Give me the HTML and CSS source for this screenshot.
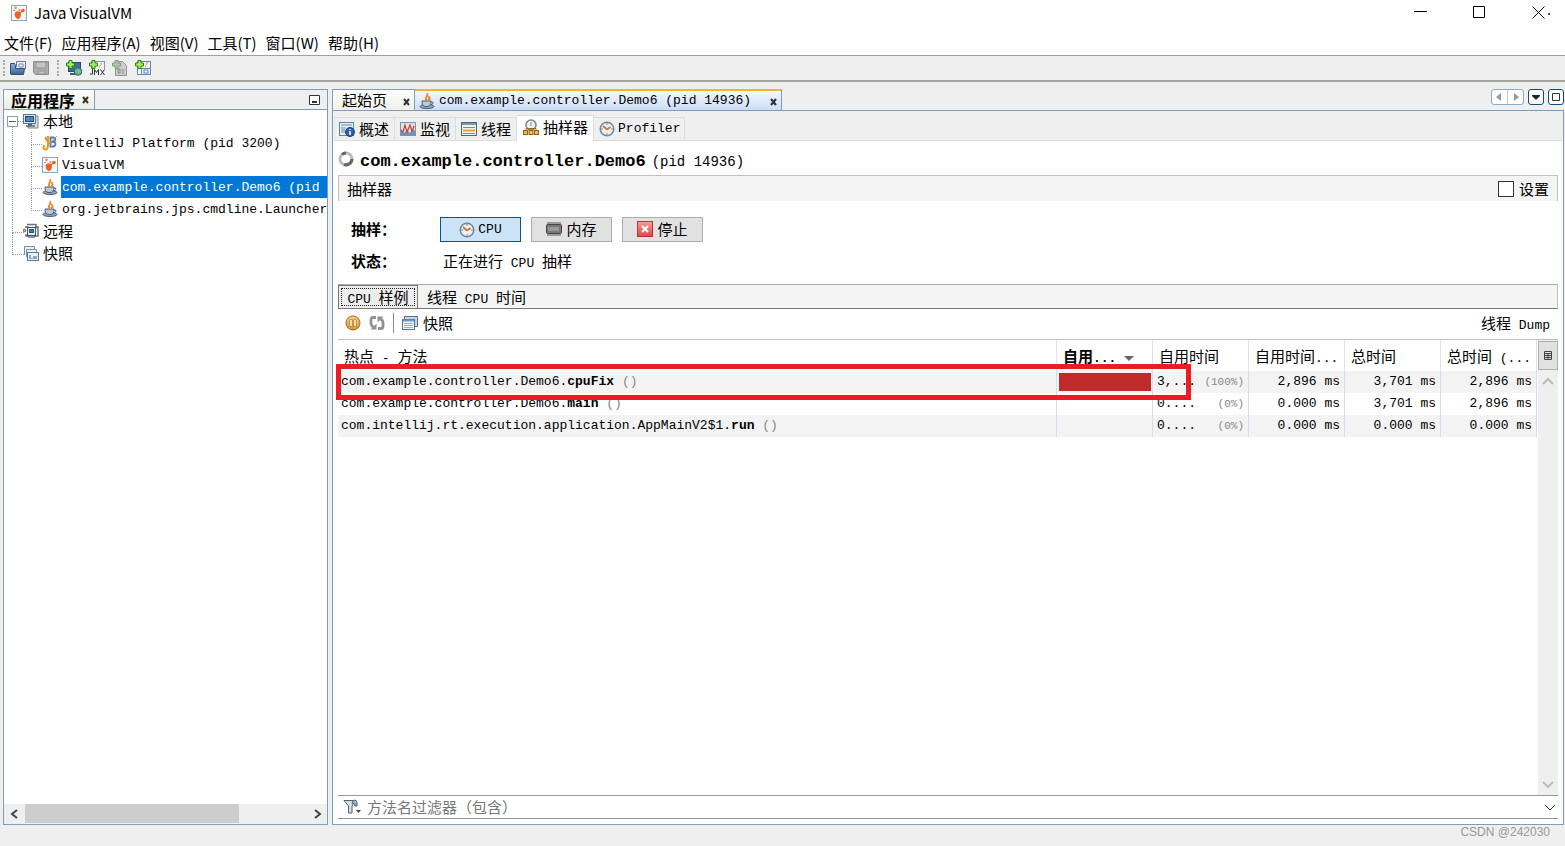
FILE: index.html
```html
<!DOCTYPE html>
<html lang="zh-CN">
<head>
<meta charset="utf-8">
<title>Java VisualVM</title>
<link rel="stylesheet" href="styles.css">
</head>
<body>
<svg class="defs" aria-hidden="true">
  <defs>
    <linearGradient id="gb" x1="0" y1="0" x2="0" y2="1"><stop offset="0" stop-color="#8fb0d4"/><stop offset="1" stop-color="#3a6496"/></linearGradient>
    <linearGradient id="go" x1="0" y1="0" x2="0" y2="1"><stop offset="0" stop-color="#fbd38a"/><stop offset="1" stop-color="#e0902c"/></linearGradient>
    <linearGradient id="gr" x1="0" y1="0" x2="0" y2="1"><stop offset="0" stop-color="#f5a09a"/><stop offset="1" stop-color="#dc4742"/></linearGradient>
    <symbol id="vm" viewBox="0 0 16 16"><rect x=".5" y=".5" width="15" height="15" fill="#f5f8fb" stroke="#8ba6c1"/><path d="M4.500 7q3-1.500 5 .5l.5 2-1 3.500q-2 2-4 0-2.500-3-.5-6z" fill="#e8622a"/><circle cx="12" cy="5.500" r="1.800" fill="#e8622a"/><circle cx="4.500" cy="2.800" r="1.400" fill="#f08a50"/><circle cx="8.500" cy="5" r="1" fill="#f08a50"/><path d="M9 8l2.500-2" stroke="#e8622a" stroke-width="1.200"/><circle cx="3" cy="5.500" r=".8" fill="#e8622a"/></symbol>
    <symbol id="java" viewBox="0 0 16 16"><ellipse cx="8" cy="13.500" rx="7" ry="2" fill="#93a7ba" stroke="#49617a"/><path d="M3 8h9q0 5-3 5.500H6Q3 13 3 8z" fill="#b9c9d8" stroke="#49617a"/><path d="M12 9q3 0 2 1.500t-3 1" fill="none" stroke="#49617a"/><path d="M8 8C4 5 10 4 8 0m1 7c4-2 0-2 1-4" fill="none" stroke="#ef8123" stroke-width="1.700"/></symbol>
    <symbol id="jb" viewBox="0 0 16 16"><path d="M6 1v9q0 5-3 4.500-3-1-.5-4M3 2l4 7" fill="none" stroke="#ee9420" stroke-width="2"/><path d="M8.500 2.500h3q2.500.5 1.500 3-1 1-3.500 1.500 4-.5 4 2 0 3-5 2.500z" fill="none" stroke="#4f78bd" stroke-width="1.800"/><path d="M6 9.500L15 1" stroke="#ee9420"/></symbol>
    <symbol id="pc" viewBox="0 0 16 16"><path d="M12 3h3v12H5v-2" fill="#d9dfe6" stroke="#778594"/><rect x=".5" y="1.500" width="12" height="9" fill="#dce5ed" stroke="#62758a"/><rect x="2.500" y="3.500" width="8" height="5" fill="#4e86c4" stroke="#234e82"/><path d="M3 13h9M5 11.500h4" stroke="#536b84" stroke-width="1.500"/></symbol>
    <symbol id="remote" viewBox="0 0 16 16"><path d="M4 1.500h9v4M2 4h3v9H3v-2m8 2h4V4h-3M5 14h7" fill="none" stroke="#607387" stroke-width="1.500"/><rect x="4.500" y="4.500" width="8" height="8" fill="#eaf0f5" stroke="#3a5370"/><rect x="6.500" y="6.500" width="4" height="3" fill="#327bca" stroke="#24558a"/><circle cx="1.500" cy="7.500" r="1.300" fill="#e6a945" stroke="#876020"/></symbol>
    <symbol id="snap" viewBox="0 0 16 16"><path d="M1.500 10V1.500h10v3M3.500 12V4.500h10v3" fill="#edf3fa" stroke="#7790b1"/><rect x="4.500" y="7.500" width="11" height="8" fill="#edf3fa" stroke="#5c7699"/><path d="M6 10h2v3h2v-2h4v3H6z" fill="#91a7c4"/></symbol>
    <symbol id="snapshot" viewBox="0 0 16 16"><path d="M2.500 4V1.500h13v10H13" fill="#c6d5e5" stroke="#5b718a"/><rect x=".5" y="4.500" width="12" height="10" fill="#f0f5f9" stroke="#5b718a"/><path d="M1 5.500h11" stroke="#6f9bc9" stroke-width="2"/><path d="M2 8.500h9M2 10.500h9M2 12.500h9" stroke="#9eb1c4"/></symbol>
    <symbol id="clock" viewBox="0 0 16 16"><circle cx="8" cy="8" r="6.800" fill="#edf3f8" stroke="#72869c" stroke-width="1.500"/><path d="M8 2v2M8 12v2M2 8h2M12 8h2" stroke="#71879b"/><path d="M4 5l4 3.500L11.500 6" fill="none" stroke="#e36b25" stroke-width="1.700"/></symbol>
    <symbol id="overview" viewBox="0 0 16 16"><rect x=".5" y="1.500" width="14" height="13" fill="#e7edf4" stroke="#6683a2"/><path d="M2 4h11M2 7h5M2 9h4M2 11h4" stroke="#718ba7"/><circle cx="11" cy="11" r="4.500" fill="#2a61ab" stroke="#173f7c"/><path d="M11 8v1m0 1v4" stroke="#fff" stroke-width="1.500"/></symbol>
    <symbol id="monitor" viewBox="0 0 16 16"><rect x=".5" y="1.500" width="15" height="13" fill="#d9e3ed" stroke="#8095aa"/><path d="M1 13V9l3 3 3-3 3 3 3-4 2 2v4H1z" fill="#4c7bb2" opacity=".8"/><path d="M1 9l2 2 2-7 2 7 3-7 2 6 2-5" fill="none" stroke="#d64137" stroke-width="1.300"/></symbol>
    <symbol id="thread" viewBox="0 0 16 16"><rect x=".5" y="1.500" width="15" height="13" fill="#f0f3f5" stroke="#536879"/><path d="M1 3h14" stroke="#8096aa" stroke-width="2"/><path d="M2 6.500h12M2 12.500h12" stroke="#56a85a"/><path d="M2 9.500h12" stroke="#e5a738" stroke-width="2"/></symbol>
    <symbol id="sampler" viewBox="0 0 16 16"><circle cx="8" cy="6" r="5" fill="#edf4fa" stroke="#71869a" stroke-width="1.500"/><path d="M3 12V9.500h10V12" fill="none" stroke="#9f661b"/><path d="M8 3v4" stroke="#dc6b24"/><rect x=".5" y="11.500" width="4" height="4" fill="#f1bf51" stroke="#936018"/><rect x="6" y="11.500" width="4" height="4" fill="#f1bf51" stroke="#936018"/><rect x="11.500" y="11.500" width="4" height="4" fill="#f1bf51" stroke="#936018"/></symbol>
    <symbol id="memory" viewBox="0 0 16 16"><rect x=".5" y="3.500" width="15" height="9" rx="1" fill="#777" stroke="#444"/><path d="M2 1v2m2-2v2m2-2v2m2-2v2m2-2v2m2-2v2m2-2v2M2 13v2m2-2v2m2-2v2m2-2v2m2-2v2m2-2v2m2-2v2" stroke="#555"/><path d="M2 6h11v4H2" fill="#999"/></symbol>
    <symbol id="stop" viewBox="0 0 16 16"><rect x=".5" y=".5" width="15" height="15" fill="url(#gr)" stroke="#bc3433"/><path d="M5 5l6 6m0-6l-6 6" stroke="#fff" stroke-width="2"/></symbol>
    <symbol id="pause" viewBox="0 0 16 16"><circle cx="8" cy="8" r="7" fill="url(#go)" stroke="#9d6726"/><path d="M6 4.500v7m4-7v7" stroke="#a8701f" stroke-width="3"/><path d="M6 5v6m4-6v6" stroke="#fff" stroke-width="1.500"/></symbol>
    <symbol id="refresh" viewBox="0 0 16 16"><path d="M7 2.500H4Q2 2.500 2 5v3q0 3 2.500 4M9 13.500h3q2 0 2-2.500V8q0-3-2.500-4" fill="none" stroke="#929292" stroke-width="2.800"/><path d="M1.500 14.500H7.500V8.500zM14.500 1.500H8.500V7.500z" fill="#929292"/></symbol>
    <symbol id="open" viewBox="0 0 16 16"><path d="M6.500 7V1.500h9V9" fill="#e6eef7" stroke="#607c9c"/><path d="M9 4h4v3H9z" fill="#fff" stroke="#6689b2"/><path d="M.5 14V3.500h4l1 2v3h9l-1 6H1z" fill="url(#gb)" stroke="#2f4f73"/></symbol>
    <symbol id="save" viewBox="0 0 16 16"><path d="M.5 1.500h15v13h-13l-2-2z" fill="#adadad" stroke="#8c8c8c"/><path d="M3 2h10v6H3zM5 11h7v3H5z" fill="#c5c5c5" stroke="#929292"/></symbol>
    <symbol id="plus" viewBox="0 0 16 16"><path d="M3 .5h3V3h2.500v3H6v2.500H3V6H.5V3H3z" fill="#a6ec5d" stroke="#26851e"/></symbol>
    <symbol id="addhost" viewBox="0 0 16 16"><rect x="2.500" y="2.500" width="12" height="9" fill="#416f9e" stroke="#294869"/><path d="M4 14h7" stroke="#455d74" stroke-width="2"/><circle cx="12" cy="11.500" r="3.800" fill="#65b77b" stroke="#355f79"/><path d="M10 10l2 1v3l2-4" fill="#88b8e5"/><use href="#plus"/></symbol>
    <symbol id="addjmx" viewBox="0 0 16 16"><rect x="2.500" y="1.500" width="13" height="13" fill="#eef3f8" stroke="#8297ac"/><path d="M11 8c-2-2 2-2 1-5" fill="none" stroke="#ef8123"/><path d="M1 9h15v6H1z" fill="#eee"/><path d="M3.500 9v5H1m4.500 1V9.500l2 3 2-3V15m2-5.500l4 5.500m0-5.500l-4 5.500" fill="none" stroke="#333"/><use href="#plus"/></symbol>
    <symbol id="adddump" viewBox="0 0 16 16"><path d="M3.500 1.500h7l4 4v10h-11z" fill="#ccc" stroke="#949494"/><path d="M6 9h2v4H6zm5 0v5" fill="none" stroke="#888"/><path d="M3 .5h3V3h2.500v3H6v2.500H3V6H.5V3H3z" fill="#abc3a1" stroke="#83a27b"/></symbol>
    <symbol id="addapp" viewBox="0 0 16 16"><rect x="2.500" y="1.500" width="13" height="13" fill="#eaf2fa" stroke="#6a88aa"/><path d="M11 7c-2-2 2-2 1-5" fill="none" stroke="#ef8123"/><path d="M3 8.500h12M6.500 9v5" stroke="#6a88aa"/><rect x="9" y="10" width="4" height="3" fill="#fff" stroke="#5887c0"/><use href="#plus"/></symbol>
    <symbol id="filter" viewBox="0 0 18 16"><path d="M1 1.500h12L9 7v7H5.500V7z" fill="#d7dfe6" stroke="#50606d"/><path d="M9 4q0-3 3-3 3 1 2 6h-2q0-3-3-3z" fill="#a8b7c3" stroke="#50606d"/><path d="M13 11h5l-2.500 3z" fill="#444"/></symbol>
  </defs>
</svg>

<div class="window">
  <header class="titlebar">
    <svg class="icon"><use href="#vm"/></svg>
    <h1 class="app-name">Java VisualVM</h1>
    <div class="window-controls">
      <button aria-label="最小化"><svg class="caption"><path d="M0 5.500h13" stroke="#000"/></svg></button>
      <button aria-label="最大化"><svg class="caption"><path d="M.5.500h11v11H.500z" fill="none" stroke="#000"/></svg></button>
      <button aria-label="关闭"><svg class="caption"><path d="M.5.500l12 12m0-12l-12 12" stroke="#000"/></svg></button>
    </div>
    <i class="speck"></i>
  </header>

  <nav class="menubar">
    <button>文件(F)</button><button>应用程序(A)</button><button>视图(V)</button><button>工具(T)</button><button>窗口(W)</button><button>帮助(H)</button>
  </nav>

  <div class="toolbar">
    <i class="grip"></i>
    <button aria-label="打开"><svg class="icon"><use href="#open"/></svg></button>
    <button aria-label="保存"><svg class="icon"><use href="#save"/></svg></button>
    <i class="grip"></i>
    <button aria-label="添加远程主机"><svg class="icon"><use href="#addhost"/></svg></button>
    <button aria-label="添加 JMX 连接"><svg class="icon"><use href="#addjmx"/></svg></button>
    <button aria-label="添加 Dump"><svg class="icon"><use href="#adddump"/></svg></button>
    <button aria-label="添加快照"><svg class="icon"><use href="#addapp"/></svg></button>
  </div>

  <main class="workspace">
    <aside class="explorer">
      <div class="explorer-head">
        <div class="explorer-tab"><b>应用程序</b><button class="close" aria-label="关闭应用程序"><svg class="cross"><path d="M1 1l5 6m0-6l-5 6" stroke="#333" stroke-width="2"/></svg></button></div>
        <button class="minimize" aria-label="最小化面板"><svg class="mini"><path d="M.5.500h10v9H.500z" fill="#fff" stroke="#333"/><path d="M3 7h5" stroke="#333" stroke-width="2"/></svg></button>
      </div>
      <ul class="tree">
        <li class="node has-toggle">
          <div class="row"><button class="toggle" aria-label="折叠"></button><svg class="icon"><use href="#pc"/></svg><span>本地</span></div>
          <ul class="children">
            <li class="leaf"><div class="row"><svg class="icon"><use href="#jb"/></svg><span class="mono">IntelliJ Platform (pid 3200)</span></div></li>
            <li class="leaf"><div class="row"><svg class="icon"><use href="#vm"/></svg><span class="mono">VisualVM</span></div></li>
            <li class="leaf"><div class="row"><svg class="icon"><use href="#java"/></svg><span class="mono selected">com.example.controller.Demo6 (pid</span></div></li>
            <li class="leaf"><div class="row"><svg class="icon"><use href="#java"/></svg><span class="mono">org.jetbrains.jps.cmdline.Launcher</span></div></li>
          </ul>
        </li>
        <li class="node"><div class="row"><svg class="icon"><use href="#remote"/></svg><span>远程</span></div></li>
        <li class="node"><div class="row"><svg class="icon"><use href="#snap"/></svg><span>快照</span></div></li>
      </ul>
      <div class="hscroll">
        <button aria-label="向左"><svg class="arrow"><path d="M8 2L3 6l5 4" fill="none" stroke="#444" stroke-width="2"/></svg></button>
        <div class="htrack"><div class="thumb"></div></div>
        <button aria-label="向右"><svg class="arrow"><path d="M4 2l5 4-5 4" fill="none" stroke="#444" stroke-width="2"/></svg></button>
      </div>
    </aside>

    <section class="editor">
      <div class="doc-tabs">
        <div class="doc-tab start"><span>起始页</span><button class="close" aria-label="关闭起始页"><svg class="cross"><path d="M1 1l5 6m0-6l-5 6" stroke="#333" stroke-width="2"/></svg></button></div>
        <div class="doc-tab active"><svg class="icon"><use href="#java"/></svg><span class="mono">com.example.controller.Demo6 (pid 14936)</span><button class="close" aria-label="关闭"><svg class="cross"><path d="M1 1l5 6m0-6l-5 6" stroke="#333" stroke-width="2"/></svg></button></div>
        <div class="doc-controls">
          <div class="pair"><button aria-label="上一个"><svg class="ctl"><path d="M9 3v8L4 7z" fill="#999"/></svg></button><button aria-label="下一个"><svg class="ctl"><path d="M6 3v8l5-4z" fill="#999"/></svg></button></div>
          <button class="framed" aria-label="文档列表"><svg class="ctl"><path d="M3 5h8v1l-4 4-4-4z" fill="#222"/></svg></button>
          <button class="framed" aria-label="最大化"><svg class="ctl"><path d="M3.500 3.500h7v7h-7z" fill="#fff" stroke="#333"/></svg></button>
        </div>
      </div>

      <div class="doc">
        <nav class="view-tabs">
          <button><svg class="icon"><use href="#overview"/></svg>概述</button>
          <button><svg class="icon"><use href="#monitor"/></svg>监视</button>
          <button><svg class="icon"><use href="#thread"/></svg>线程</button>
          <button class="current"><svg class="icon"><use href="#sampler"/></svg>抽样器</button>
          <button class="mono"><svg class="icon"><use href="#clock"/></svg>Profiler</button>
        </nav>

        <div class="content">
          <h2 class="heading"><svg class="icon" viewBox="0 0 16 16"><circle cx="8" cy="8" r="6" fill="none" stroke="#bbb" stroke-width="3"/><path d="M4 3.500A6 6 0 0 1 8 2M14 8a6 6 0 0 1-8 5.500" fill="none" stroke="#666" stroke-width="3"/></svg><b>com.example.controller.Demo6</b><span>(pid 14936)</span></h2>
          <div class="section-head"><span>抽样器</span><label><input type="checkbox">设置</label></div>

          <div class="controls">
            <b>抽样：</b>
            <div class="buttons">
              <button class="pressed mono"><svg class="icon"><use href="#clock"/></svg>CPU</button>
              <button><svg class="icon"><use href="#memory"/></svg>内存</button>
              <button><svg class="icon"><use href="#stop"/></svg>停止</button>
            </div>
            <b>状态：</b>
            <p class="status">正在进行<span class="mono"> CPU </span>抽样</p>
          </div>

          <nav class="sample-tabs">
            <button class="current"><span><span class="mono">CPU </span>样例</span></button>
            <button><span>线程<span class="mono"> CPU </span>时间</span></button>
          </nav>

          <div class="table-tools">
            <button aria-label="暂停"><svg class="icon"><use href="#pause"/></svg></button>
            <button aria-label="刷新"><svg class="icon"><use href="#refresh"/></svg></button>
            <i class="divider"></i>
            <button><svg class="icon"><use href="#snapshot"/></svg>快照</button>
            <button class="dump"><span>线程<span class="mono"> Dump</span></span></button>
          </div>

          <div class="results">
            <div class="table-area">
              <table class="hotspots">
                <colgroup><col><col class="metric"><col class="metric"><col class="metric"><col class="metric"><col class="metric"></colgroup>
                <thead><tr>
                  <th>热点<span class="mono"> - </span>方法</th>
                  <th class="sorted">自用<span class="mono">...</span><svg class="sort"><path d="M0 1h10L5 6z" fill="#666"/></svg></th>
                  <th>自用时间</th><th>自用时间<span class="mono">...</span></th><th>总时间</th><th>总时间<span class="mono"> (...</span></th>
                </tr></thead>
                <tbody>
                  <tr><td>com.example.controller.Demo6.<b>cpuFix</b> <i>()</i></td><td class="bar-cell"><div class="bar"></div></td><td><div class="split"><span>3,...</span><small>(100%)</small></div></td><td>2,896 ms</td><td>3,701 ms</td><td>2,896 ms</td></tr>
                  <tr><td>com.example.controller.Demo6.<b>main</b> <i>()</i></td><td class="bar-cell"></td><td><div class="split"><span>0....</span><small>(0%)</small></div></td><td>0.000 ms</td><td>3,701 ms</td><td>2,896 ms</td></tr>
                  <tr><td>com.intellij.rt.execution.application.AppMainV2$1.<b>run</b> <i>()</i></td><td class="bar-cell"></td><td><div class="split"><span>0....</span><small>(0%)</small></div></td><td>0.000 ms</td><td>0.000 ms</td><td>0.000 ms</td></tr>
                </tbody>
              </table>
            </div>
            <div class="vscroll">
              <button class="columns" aria-label="选择列"><svg class="grid"><path d="M.5.500h7v8H.500zM0 2.500h8M0 4.500h8M0 6.500h8M4 2v7" fill="none" stroke="#444"/></svg></button>
              <button aria-label="向上"><svg class="arrow"><path d="M1 8l5-5 5 5" fill="none" stroke="#bbb" stroke-width="2"/></svg></button>
              <div class="vtrack"></div>
              <button aria-label="向下"><svg class="arrow"><path d="M1 4l5 5 5-5" fill="none" stroke="#bbb" stroke-width="2"/></svg></button>
            </div>
            <div class="highlight"></div>
          </div>

          <div class="filter">
            <svg class="funnel"><use href="#filter"/></svg>
            <input type="text" aria-label="方法名过滤器" placeholder="方法名过滤器（包含）">
            <button aria-label="展开"><svg class="arrow"><path d="M1 4l5 5 5-5" fill="none" stroke="#333"/></svg></button>
          </div>
        </div>
      </div>
    </section>
  </main>
  <footer class="credit">CSDN @242030</footer>
</div>
</body>
</html>
```
FILE: styles.css
```css
* { box-sizing: border-box; }
body { margin: 0; background: #efefef; color: #000; font: 15px/22px "Noto Sans CJK SC", sans-serif; }
button { margin: 0; padding: 0; border: 0; background: none; color: inherit; font: inherit; display: flex; align-items: center; justify-content: center; white-space: nowrap; }
ul { list-style: none; margin: 0; padding: 0; }
svg { display: block; flex: none; }
.defs { position: absolute; width: 0; height: 0; }
.icon { width: 16px; height: 16px; }
.mono { font-family: "Liberation Mono", "Noto Sans CJK SC", monospace; font-size: 13px; line-height: 14px; white-space: pre; }
.window { display: flex; flex-direction: column; min-height: 100vh; }

.titlebar { position: relative; display: flex; align-items: center; gap: 7px; height: 26px; padding: 0 0 1px 11px; background: #fff; }
.app-name { margin: 0; font-size: 15px; font-weight: 400; }
.window-controls { display: flex; gap: 46px; margin-left: auto; padding-right: 20px; }
.caption { width: 13px; height: 13px; }
.speck { position: absolute; right: 15px; top: 13px; width: 2px; height: 2px; background: #555; }

.menubar { display: flex; align-items: center; gap: 9px; height: 29px; padding: 5px 4px 0; background: #fff; }
.toolbar { display: flex; align-items: center; gap: 7px; height: 27px; padding: 0 3px; border-top: 1px solid #a0a0a0; border-bottom: 2px solid #a5a5a0; }
.grip { width: 2px; height: 16px; margin-right: -2px; border-left: 2px dotted #aaa; }
.toolbar button + .grip { margin-left: 1px; margin-right: 0; }

.workspace { flex: 1; display: flex; gap: 4px; padding: 7px 0 0 3px; }
.explorer { flex: none; width: 325px; display: flex; flex-direction: column; border: 1px solid #7f9db9; background: #fff; }
.explorer-head { display: flex; align-items: center; justify-content: space-between; height: 20px; padding-right: 7px; background: #efefef; border-bottom: 1px solid #7f9db9; }
.explorer-tab { display: flex; align-items: center; gap: 7px; height: 19px; padding: 0 5px 0 7px; border-right: 1px solid #7f9db9; background: linear-gradient(#fff, #ecece2); }
.explorer-tab b { font-size: 16px; }
.cross { width: 7px; height: 8px; }
.mini { width: 11px; height: 10px; }

.tree { flex: 1; overflow: hidden; }
.row { display: flex; align-items: center; gap: 4px; height: 22px; padding-left: 19px; white-space: nowrap; }
.row .mono { height: 22px; line-height: 24px; }
.node, .leaf { position: relative; }
.node .toggle { position: absolute; left: 3px; top: 6px; width: 11px; height: 11px; border: 1px solid #999; background: linear-gradient(#45649a, #45649a) center / 7px 1px no-repeat #fff; z-index: 1; }
.node::before { content: ""; position: absolute; left: 8px; top: 0; width: 11px; height: 12px; border-left: 1px dotted #999; border-bottom: 1px dotted #999; }
.node:nth-child(2)::after { content: ""; position: absolute; left: 8px; top: 12px; height: 10px; border-left: 1px dotted #999; }
.node.has-toggle::before { top: 11px; height: 99px; border-bottom: 0; }
.node.has-toggle::after { content: ""; position: absolute; left: 14px; top: 11px; width: 5px; border-top: 1px dotted #999; }
.leaf .row { padding-left: 38px; gap: 3px; }
.leaf .row .mono { padding-left: 1px; }
.leaf::before { content: ""; position: absolute; left: 27px; top: 0; width: 10px; height: 12px; border-left: 1px dotted #999; border-bottom: 1px dotted #999; }
.leaf:not(:last-child)::after { content: ""; position: absolute; left: 27px; top: 12px; height: 10px; border-left: 1px dotted #999; }
.selected { flex: 1; min-width: 0; background: #0078d7; color: #fff; }
.hscroll { display: flex; height: 20px; background: #efefef; }
.hscroll button { width: 21px; }
.arrow { width: 12px; height: 12px; }
.htrack { flex: 1; }
.thumb { width: 76%; height: 19px; background: #cdcdcd; }

.editor { flex: 1; min-width: 0; display: flex; flex-direction: column; }
.doc-tabs { display: flex; height: 21px; }
.doc-tab { display: flex; align-items: center; border: 1px solid #7f9db9; border-bottom: 0; }
.start { width: 83px; justify-content: space-between; padding: 0 4px 0 9px; background: linear-gradient(#fff, #f0f0e8); }
.active { gap: 4px; padding: 0 4px; background: linear-gradient(#f5f8ff, #ccdcf5); border-top: 2px solid #f5b335; border-left: 0; }
.active .mono { line-height: 20px; }
.doc-tab .close { margin-top: 3px; }
.active .close { margin-left: 15px; }
.doc-controls { display: flex; align-items: flex-start; gap: 4px; margin-left: auto; margin-right: 1px; }
.doc-controls .pair { display: flex; border: 1px solid #8faac3; border-radius: 3px; background: #fff; }
.pair button + button { border-left: 1px solid #c3d0db; }
.framed { border: 1px solid #174a78; border-radius: 3px; background: #fff; }
.ctl { width: 14px; height: 14px; }
.pair .ctl { width: 15px; }

.doc { flex: 1; display: flex; flex-direction: column; margin-right: 1px; border: 1px solid #7f9db9; background: #fff; }
.view-tabs { display: flex; align-items: flex-end; height: 30px; padding-left: 1px; background: #efefef; border-bottom: 1px solid #ddd; }
.view-tabs button { gap: 4px; height: 23px; padding: 0 5px; border-top: 1px solid #ddd; border-right: 1px solid #ddd; }
.view-tabs .current { height: 26px; margin-bottom: -1px; padding: 0 5px 3px 6px; background: #fff; }
.view-tabs .mono { gap: 3px; padding: 0 4px 0 5px; line-height: 22px; }
.content { flex: 1; display: flex; flex-direction: column; padding: 0 5px; }
.heading { display: flex; align-items: center; height: 34px; margin: 0; padding-top: 8px; font: 17px/24px "Liberation Mono", monospace; }
.heading .icon { margin: -6px 6px 0 0; }
.heading span { font-size: 14px; margin-left: 6px; }
.section-head { display: flex; align-items: center; justify-content: space-between; height: 26px; padding: 0 8px; background: #f4f4f4; border: 1px solid #c0c0c0; border-bottom: 0; }
.section-head label { display: flex; align-items: center; gap: 5px; }
input[type="checkbox"] { appearance: none; width: 16px; height: 16px; margin: 0; border: 1px solid #333; background: #fff; }

.controls { display: grid; grid-template-columns: 89px 1fr; row-gap: 7px; padding: 16px 13px 11px; }
.controls b { line-height: 24px; }
.buttons { display: flex; gap: 10px; }
.buttons button { width: 81px; height: 25px; gap: 4px; padding-bottom: 1px; border: 1px solid #adadad; background: #e1e1e1; }
.buttons .pressed { gap: 3px; padding: 0; border-color: #00559b; background: #cce4f7; }
.status { margin: 0; padding-left: 3px; line-height: 24px; }

.sample-tabs { display: flex; height: 25px; background: #f4f4f4; border-top: 1px solid #aaa; border-right: 1px solid #c0c0c0; border-bottom: 1px solid #777; }
.sample-tabs button { padding: 0 9px; }
.sample-tabs .current { width: 80px; margin-bottom: -1px; padding: 0; border: 1px solid #777; background: #eee; outline: 1px dotted #222; outline-offset: -4px; }

.table-tools { display: flex; align-items: center; gap: 8px; height: 31px; padding: 0 8px 3px 7px; border-bottom: 1px solid #c0c0c0; }
.table-tools button { gap: 5px; }
.divider { width: 1px; height: 20px; background: #888; }
.table-tools .dump { margin-left: auto; }

.results { position: relative; flex: 1; display: flex; }
.table-area { flex: 1; min-width: 0; }
.hotspots { width: 100%; table-layout: fixed; border-collapse: collapse; font: 13px/20px "Liberation Mono", monospace; }
.metric { width: 96px; }
.hotspots th { height: 31px; padding: 0 6px; border-right: 1px solid #e3e3e3; text-align: left; font: 15px/28px "Noto Sans CJK SC", sans-serif; white-space: nowrap; overflow: hidden; }
.hotspots th.sorted { font-weight: 700; }
.sort { display: inline-block; width: 10px; height: 7px; margin-left: 8px; }
.hotspots td { height: 22px; padding: 0 4px; border-right: 1px solid #d5daf0; text-align: right; white-space: nowrap; overflow: hidden; }
.hotspots td:first-child { padding-left: 3px; text-align: left; }
.hotspots tbody tr:nth-child(odd) { background: #f3f3f3; }
.hotspots td i { color: #888; font-style: normal; }
.hotspots .bar-cell { padding: 0 1px 0 2px; }
.bar { height: 18px; background: #c12a2a; }
.split { display: flex; justify-content: space-between; }
.split small { font-size: 11px; color: #888; }
.vscroll { display: flex; flex-direction: column; align-items: center; width: 20px; margin-left: 1px; background: #efefef; }
.vscroll button { width: 20px; height: 22px; }
.vscroll .columns { height: 29px; margin: 1px 0; border: 1px solid #adadad; background: #e1e1e1; }
.grid { width: 8px; height: 9px; }
.vtrack { flex: 1; }
.highlight { position: absolute; left: -2px; right: 367px; top: 24px; height: 36px; border: 5px solid #ea1c24; pointer-events: none; }

.filter { display: flex; align-items: center; gap: 6px; height: 24px; margin-bottom: 5px; padding: 0 2px 0 5px; border-top: 1px solid #999; border-bottom: 1px solid #999; }
.funnel { width: 18px; height: 16px; }
.filter input { flex: 1; min-width: 0; padding: 0; border: 0; outline: 0; background: none; font: inherit; }
.filter input::placeholder { color: #777; opacity: 1; }
.credit { height: 21px; padding-right: 15px; text-align: right; color: #999; font: 12px/14px "Liberation Sans", sans-serif; }
```
